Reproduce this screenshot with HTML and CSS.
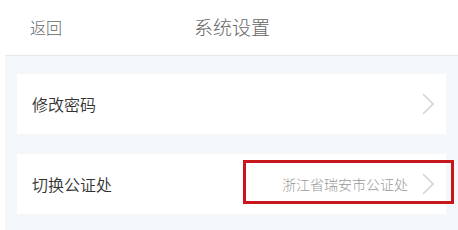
FILE: index.html
```html
<!DOCTYPE html>
<html>
<head>
    <meta charset="utf-8">
    <title>系统设置</title>
    <link rel="stylesheet" href="styles.css">
</head>
<body>
    <div class="page">
        <div class="nav-bar">
            <span class="nav-back">返回</span>
            <span class="nav-title">系统设置</span>
        </div>

        <div class="settings">
            <div class="setting-item">
                <span class="setting-label">修改密码</span>
                <svg class="chevron" width="12" height="22" viewBox="0 0 12 22">
                    <polyline points="1,1 11,11 1,21" fill="none" stroke="#d4d4d4" stroke-width="1.6"/>
                </svg>
            </div>
            <div class="setting-item">
                <span class="setting-label">切换公证处</span>
                <span class="setting-value">浙江省瑞安市公证处</span>
                <svg class="chevron" width="12" height="22" viewBox="0 0 12 22">
                    <polyline points="1,1 11,11 1,21" fill="none" stroke="#d4d4d4" stroke-width="1.6"/>
                </svg>
                <!-- highlight box around current office -->
                <div class="highlight"></div>
            </div>
        </div>
    </div>
</body>
</html>
```

FILE: styles.css
```css
* {
    box-sizing: border-box;
}

body {
    margin: 0;
    background: #fff;
    font-family: "Noto Sans CJK SC", "Noto Sans", sans-serif;
    font-weight: 300;
}

.page {
    margin-left: 5px;
    height: 230px;
    background: #f5f8fb;
}

.nav-bar {
    position: relative;
    display: flex;
    align-items: center;
    height: 56px;
    padding: 0 0 2px 25px;
    background: #fff;
    border-bottom: 1px solid #e6e8ea;
}

.nav-back {
    font-size: 16px;
    color: #666;
}

.nav-title {
    margin-left: 132px;
    font-size: 19px;
    color: #666;
}

.settings {
    display: flex;
    flex-direction: column;
    gap: 20px;
    padding: 18px 12px 0;
}

.setting-item {
    position: relative;
    display: flex;
    align-items: center;
    height: 60px;
    padding: 0 12px 0 15px;
    background: #fff;
}

.setting-label {
    flex: 1;
    font-size: 16px;
    font-weight: 350;
    color: #333;
}

.setting-value {
    margin-right: 14px;
    font-size: 14px;
    color: #999;
}

.chevron {
    display: block;
}

.highlight {
    position: absolute;
    left: 226px;
    top: 6px;
    width: 211px;
    height: 44px;
    border: 3px solid #c8161d;
}
```
